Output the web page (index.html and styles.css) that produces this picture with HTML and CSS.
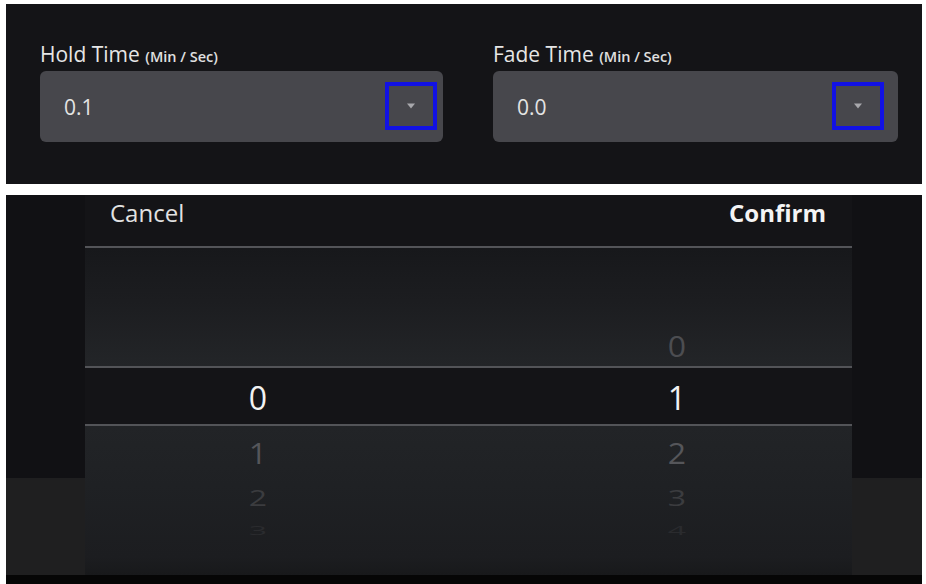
FILE: index.html
```html
<!DOCTYPE html>
<html lang="en">
<head>
<meta charset="utf-8">
<title>Time Picker</title>
<link rel="stylesheet" href="styles.css">
</head>
<body>
<section class="top">
  <div class="field">
    <div class="label">Hold Time <span class="unit">(Min / Sec)</span></div>
    <div class="input">
      <span class="value">0.1</span>
      <span class="arrow arrow-a">
        <svg width="10" height="8" viewBox="0 0 10 8"><path d="M1 1.5 L9 1.5 L5 6.5 Z" fill="#a8a8ac"/></svg>
      </span>
    </div>
  </div>
  <div class="field">
    <div class="label">Fade Time <span class="unit">(Min / Sec)</span></div>
    <div class="input">
      <span class="value">0.0</span>
      <span class="arrow arrow-b">
        <svg width="10" height="8" viewBox="0 0 10 8"><path d="M1 1.5 L9 1.5 L5 6.5 Z" fill="#a8a8ac"/></svg>
      </span>
    </div>
  </div>
</section>

<section class="bottom">
  <div class="stage">
    <div class="side side-left"><div class="side-top"></div><div class="side-bot"></div></div>
    <div class="picker">
      <div class="picker-head">
        <span class="cancel">Cancel</span>
        <span class="confirm">Confirm</span>
      </div>
      <div class="rule"></div>
      <div class="zone zone-up">
        <div class="col"></div>
        <div class="col col-2"><div class="item up1">0</div></div>
      </div>
      <div class="rule"></div>
      <div class="zone zone-sel">
        <div class="col"><div class="item sel">0</div></div>
        <div class="col col-2"><div class="item sel">1</div></div>
      </div>
      <div class="rule"></div>
      <div class="zone zone-down">
        <div class="col">
          <div class="item d1">1</div>
          <div class="item d2">2</div>
          <div class="item d3">3</div>
        </div>
        <div class="col col-2">
          <div class="item d1">2</div>
          <div class="item d2">3</div>
          <div class="item d3">4</div>
        </div>
      </div>
    </div>
    <div class="side side-right"><div class="side-top"></div><div class="side-bot"></div></div>
  </div>
  <div class="foot"></div>
</section>
</body>
</html>
```

FILE: styles.css
```css
html, body {
  margin: 0;
  padding: 0;
}
body {
  width: 926px;
  height: 584px;
  overflow: hidden;
  background: #ffffff;
  font-family: "Open Sans", "Noto Sans", "DejaVu Sans", sans-serif;
}

/* ---------- top panel ---------- */
.top {
  margin: 4px 4px 0 6px;
  height: 180px;
  box-sizing: border-box;
  padding: 36px 24px 0 34px;
  background: #141417;
  display: grid;
  grid-template-columns: 403px 405px;
  column-gap: 50px;
  align-content: start;
}
.label {
  font-size: 21px;
  line-height: 28px;
  height: 30px;
  color: #e6e6e6;
  white-space: nowrap;
}
.unit {
  font-size: 14.5px;
  font-weight: 600;
  color: #e0e0e0;
}
.input {
  margin-top: 1px;
  height: 71px;
  border-radius: 6px;
  background: #47474c;
  display: flex;
  align-items: center;
  justify-content: space-between;
  padding-left: 24px;
  box-sizing: border-box;
}
.value {
  font-size: 21px;
  line-height: 28px;
  color: #e4e4e4;
}
.arrow {
  width: 52px;
  height: 48px;
  box-sizing: border-box;
  border: 4px solid #1212e4;
  display: flex;
  align-items: center;
  justify-content: center;
  margin-top: -2px;
}
.arrow-a { margin-right: 6px; }
.arrow-b { margin-right: 14px; }

/* ---------- bottom panel ---------- */
.bottom {
  margin: 11px 4px 0 6px;
  height: 389px;
  display: flex;
  flex-direction: column;
  background: #111114;
}
.stage {
  flex: 1;
  display: flex;
}
.side {
  display: flex;
  flex-direction: column;
}
.side-left { width: 79px; }
.side-right { width: 70px; }
.side-top {
  height: 283px;
  background: #111114;
}
.side-bot {
  flex: 1;
  background: #1f1f20;
}
.foot {
  height: 9px;
  background: #060606;
}

.picker {
  width: 767px;
  display: flex;
  flex-direction: column;
}
.picker-head {
  height: 51px;
  box-sizing: border-box;
  padding: 1px 26px 0 25px;
  background: #141417;
  display: flex;
  justify-content: space-between;
  align-items: flex-start;
  font-size: 24px;
  line-height: 33px;
}
.cancel { color: #e2e2e2; }
.confirm { color: #f4f4f4; font-weight: 700; }

.rule {
  height: 2px;
  background: #535458;
}

.zone {
  display: grid;
  grid-template-columns: 346px 1fr;
}
.col {
  display: flex;
  flex-direction: column;
  align-items: center;
}
.col-2 { padding-left: 71px; }

.item {
  font-size: 32px;
  text-align: center;
}

.zone-up {
  height: 118px;
  background: linear-gradient(to bottom, #17181b 0%, #1c1d20 45%, #232528 100%);
}
.zone-up .col { justify-content: flex-end; }
.up1 {
  height: 40px;
  line-height: 40px;
  color: #4c4d51;
  transform: scaleY(0.9);
}

.zone-sel {
  height: 56px;
  box-sizing: border-box;
  padding-top: 5px;
  background: #141417;
}
.sel {
  height: 50px;
  line-height: 50px;
  color: #f2f2f2;
}

.zone-down {
  flex: 1;
  background: linear-gradient(to bottom, #222427 0%, #1f2124 40%, #1c1d20 88%, #18191b 100%);
}
.d1 {
  height: 54px;
  line-height: 54px;
  color: #55565a;
  transform: scaleY(0.9);
}
.d2 {
  height: 36px;
  line-height: 36px;
  color: #3b3c3f;
  transform: scaleY(0.7);
}
.d3 {
  height: 28px;
  line-height: 28px;
  color: #2a2b2e;
  transform: scaleY(0.4);
}
```
